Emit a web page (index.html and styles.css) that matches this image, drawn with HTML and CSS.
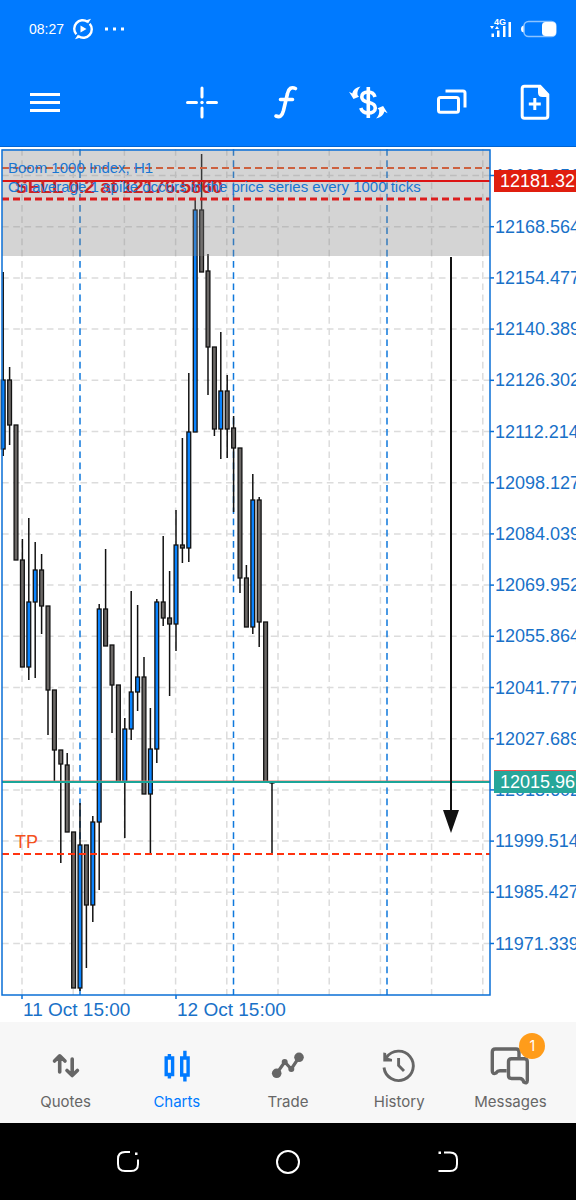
FILE: index.html
```
<!DOCTYPE html>
<html lang="en">
<head>
    <meta charset="UTF-8">
    <meta name="viewport" content="width=device-width, initial-scale=1.0">
    <title>Boom 1000 Index, H1</title>
    <link rel="stylesheet" href="styles.css">
</head>
<body>
    <header>
        <div class="status-bar">
            <span class="clock">08:27</span>
            <svg class="play-icon" width="22" height="22" viewBox="0 0 22 22">
                <path d="M4.300 16.300A8.500 8.500 0 0 1 15.500 3.700M17.700 5.700A8.500 8.500 0 0 1 6.500 18.300" fill="none" stroke="#fff" stroke-width="2.400"/>
                <path d="M13.500 2.500L19 .8 16 5.500zM8.500 19.500L3 21.200 6 16.500zM8.500 7.500L14.500 11 8.500 14.500z" fill="#fff"/>
            </svg>
            <svg width="22" height="22" viewBox="0 0 22 22" fill="#fff">
                <rect x="0" y="9.500" width="3" height="3"/>
                <rect x="8" y="9.500" width="3" height="3"/>
                <rect x="16" y="9.500" width="3" height="3"/>
            </svg>
            <svg class="signal" width="24" height="22" viewBox="0 0 24 22" fill="#fff">
                <text x="5" y="7" class="signal-text">4G</text>
                <path d="M1 8h4l-2 3zM6 11h4l-2-3zM2.500 15.500h2.500v3.500H2.500zM8 12.500h2.500v6.500H8zM14 8h2.500v11H14zM19.500 4h2.500v15H19.500z"/>
            </svg>
            <svg class="battery" width="36" height="18" viewBox="0 0 36 18">
                <rect x="3" y="1.500" width="32" height="15" rx="4.500" fill="none" stroke="#8cc3ff" stroke-width="1.500"/>
                <rect x="21" y="2" width="14" height="14" rx="3.500" fill="#fff"/>
                <path d="M2.500 5.500Q0 6 0 9t2.500 3.500z" fill="#fff"/>
            </svg>
        </div>
        <div class="toolbar">
            <button class="menu" aria-label="Menu">
                <svg width="40" height="40" viewBox="0 0 40 40">
                    <path d="M5 11.500h30M5 19.500h30M5 27.500h30"/>
                </svg>
            </button>
            <button aria-label="Crosshair">
                <svg width="40" height="40" viewBox="0 0 40 40">
                    <path d="M4.500 19.500h9M24.500 19.500h9M19 5v9M19 25v9" stroke-linecap="round"/>
                    <circle cx="19" cy="19.500" r="1.700" class="solid"/>
                </svg>
            </button>
            <button aria-label="Indicators">
                <svg width="40" height="40" viewBox="0 0 40 40">
                    <path d="M29.500 5.500c-4-2-7 0-8 5l-4 17c-1.300 5-3.500 7.300-7.500 5.500M14.500 16.500h12" stroke-width="3.600" stroke-linecap="round"/>
                </svg>
            </button>
            <button aria-label="New order">
                <svg width="40" height="40" viewBox="0 0 40 40">
                    <path d="M26 14c-1-3.500-3.500-5-6.700-5-4 0-6.500 1.800-6.500 5 0 3.500 2.700 4.500 6.500 5.300s7 2 7 5.700c0 3.300-3 5-7 5s-6.500-1.700-7.500-5" stroke-width="3.600"/>
                    <path d="M19.300 4v31" stroke-width="3.600"/>
                    <path id="turn" class="solid" d="M0 8.800L4.500 16 10 13.800 8.500 12C8 9 9 6 11.500 3.500 7 4.500 4 7 3.300 10.500z"/>
                    <use href="#turn" transform="rotate(180 19.300 19.500)"/>
                </svg>
            </button>
            <button aria-label="Windows">
                <svg width="40" height="40" viewBox="0 0 40 40">
                    <rect x="6.500" y="14.500" width="20" height="14.700" rx="2"/>
                    <path d="M13.500 8H31q2 0 2 2v14.500"/>
                </svg>
            </button>
            <button aria-label="New chart">
                <svg width="40" height="40" viewBox="0 0 40 40">
                    <path d="M9.500 3.300H25L32.800 11.500V33q0 2.300-2.300 2.300h-21Q7.200 35.300 7.200 33V5.600Q7.200 3.300 9.500 3.300zM19.800 15v12M13.800 21h12"/>
                    <path class="solid" d="M23 3H26l8 8.500V14h-6.500q-4.500 0-4.500-4.500z"/>
                </svg>
            </button>
        </div>
    </header>

    <main>
        <svg class="chart" id="chart" viewBox="0 147 576 875">
            <g id="grid"></g>
            <g id="candles"></g>
            <path class="stop-line" d="M2 168H490"/>
            <rect class="zone" x="2" y="149" width="488" height="107"/>
            <path class="ask-line" d="M2 181H490"/>
            <path class="open-line" d="M2 199H490"/>
            <path class="last-line" d="M2 781H490"/>
            <path class="bid-line" d="M2 782H490"/>
            <path class="tp-line" d="M2 854H490"/>
            <text class="sell" x="15" y="193">SELL 0.2 at 12176.5860</text>
            <text class="title" x="8" y="173">Boom 1000 Index, H1</text>
            <text class="title" x="8" y="192">On average 1 spike occurs in the price series every 1000 ticks</text>
            <text class="tp" x="15" y="848">TP</text>
            <path class="arrow" d="M451 257V812"/>
            <path class="arrow-head" d="M443 810h16l-8 23z"/>
            <rect class="frame" x="2" y="150" width="488" height="845" stroke-width="1.500"/>
            <g id="prices"></g>
            <text class="time" x="23" y="1016">11 Oct 15:00</text>
            <text class="time" x="177" y="1016">12 Oct 15:00</text>
            <rect class="ask-tag" x="494" y="170" width="82" height="22"/>
            <text class="tag-text" x="500" y="187">12181.32</text>
            <rect class="last-tag" x="494" y="770" width="82" height="2"/>
            <rect class="bid-tag" x="494" y="771" width="82" height="22"/>
            <text class="tag-text" x="500" y="788">12015.96</text>
        </svg>
    </main>

    <nav class="tabs">
        <a href="#quotes">
            <svg width="40" height="40" viewBox="0 0 40 40">
                <path d="M13.700 26V10M8.500 15l5.200-5.200L19 15M26.200 13v16M21 24.500l5.200 5 5.200-5" stroke-width="3.600" stroke-linecap="round" stroke-linejoin="round"/>
            </svg>
            Quotes
        </a>
        <a href="#charts" class="active">
            <svg width="40" height="40" viewBox="0 0 40 40">
                <path d="M9.200 12h6.400v16.500H9.200zM12.400 8v3.500M12.400 29v3.500M24.700 12h6.400v17h-6.400zM27.900 4.700v6.800M27.900 29v6.500" stroke-width="3.400"/>
            </svg>
            Charts
        </a>
        <a href="#trade">
            <svg width="40" height="40" viewBox="0 0 40 40">
                <path d="M8.700 27.300l8-11.300 6.600 7 7.700-11.700" stroke-width="3.200"/>
                <circle cx="8.700" cy="27.300" r="4.800" class="solid"/>
                <circle cx="16.700" cy="16" r="3" class="solid"/>
                <circle cx="23.300" cy="23" r="3" class="solid"/>
                <circle cx="31" cy="11.300" r="4.800" class="solid"/>
            </svg>
            Trade
        </a>
        <a href="#history">
            <svg width="40" height="40" viewBox="0 0 40 40">
                <path d="M5 21.500A14.700 14.700 0 1 0 7.500 11.500M19.600 12v7.500l5.400 5.500" stroke-width="2.900"/>
                <path class="solid" d="M4.300 6.500L7 7l1 4.500 5 1.500v2.500H4.300z"/>
            </svg>
            History
        </a>
        <a href="#messages">
            <svg width="40" height="40" viewBox="0 0 40 40">
                <path d="M16.500 24.800H10q-2.500 0-4 2.200-3.700 1.500-3.700-2V6q0-3 3-3H26q3 0 3 3v5M21.500 12.800h12.800q3 0 3 3v18.700q0 3.500-3.500 1.500-1-3.500-4-3.500h-8.300q-3 0-3-3V15.800q0-3 3-3z" stroke-width="3.400"/>
            </svg>
            Messages
            <span class="badge">1</span>
        </a>
    </nav>

    <footer>
        <button aria-label="Recent apps">
            <svg width="24" height="24" viewBox="0 0 24 24">
                <path d="M14 2H9Q2 2 2 9v5q0 7 7 7h6q7 0 7-7V9.500" />
                <rect x="19" y="2.500" width="2.500" height="2.500" class="solid"/>
            </svg>
        </button>
        <button aria-label="Home">
            <svg width="24" height="24" viewBox="0 0 24 24">
                <circle cx="12" cy="12" r="11"/>
            </svg>
        </button>
        <button aria-label="Back">
            <svg width="24" height="24" viewBox="0 0 24 24">
                <path d="M8 2.500h6q7 0 7 7v4.500q0 7-7 7H2.500"/>
                <rect x="2.500" y="1.500" width="2.500" height="2.500" class="solid"/>
            </svg>
        </button>
    </footer>

    <script src="chart.js"></script>
</body>
</html>
```
FILE: styles.css
```
body {
    margin: 0;
    min-height: 100vh;
    display: flex;
    flex-direction: column;
    background: #fff;
    font-family: "Liberation Sans", Arial, sans-serif;
}

button {
    margin: 0;
    padding: 0;
    border: none;
    background: none;
    cursor: pointer;
}

svg {
    display: block;
}

/* header */
header {
    background: #007aff;
    border-bottom: 1px solid #0064d2;
    color: #fff;
}

.status-bar {
    display: flex;
    align-items: center;
    height: 58px;
    padding: 0 19px 0 29px;
}

.clock {
    font-size: 14px;
}

.play-icon {
    margin: 0 11px 0 8px;
}

.signal {
    margin-left: auto;
}

.signal-text {
    font-size: 9px;
    font-weight: bold;
}

.battery {
    margin-left: 8px;
}

.toolbar {
    display: flex;
    height: 86px;
    padding-top: 2px;
}

.toolbar button {
    display: flex;
    flex: 0 0 83px;
    align-items: center;
    justify-content: center;
}

.toolbar .menu {
    flex-basis: 89px;
    margin-right: auto;
}

.toolbar svg {
    fill: none;
    stroke: #fff;
    stroke-width: 3;
}

.toolbar .solid {
    fill: #fff;
    stroke: none;
}

/* chart */
.chart {
    width: 100%;
    height: auto;
    fill: none;
}

.grid-line {
    stroke: #dcdcdc;
}

.day-line {
    stroke: #0f78dc;
}

.wick {
    stroke: #111;
}

.candle {
    fill: #6b6866;
    stroke: #111;
}

.candle.up {
    fill: #0a84ff;
}

.zone {
    fill: rgba(128, 128, 128, 0.34);
}

.stop-line {
    stroke: #f4511e;
    stroke-width: 2;
    stroke-dasharray: 7 4;
}

.ask-line {
    stroke: #dc1414;
    stroke-width: 2;
}

.open-line {
    stroke: #dc1e1e;
    stroke-width: 3;
    stroke-dasharray: 7 4;
}

.last-line {
    stroke: #e57368;
}

.bid-line {
    stroke: #1ca598;
    stroke-width: 2;
}

.tp-line {
    stroke: #ff3310;
    stroke-width: 2;
    stroke-dasharray: 7 4;
}

.frame,
.tick {
    stroke: #0a6fd6;
}

.arrow {
    stroke: #111;
    stroke-width: 2;
}

.arrow-head {
    fill: #111;
}

.title {
    fill: #1976d2;
    font-size: 15px;
}

.sell {
    fill: #cc2525;
    font-size: 19px;
    font-weight: bold;
}

.tp {
    fill: #f4511e;
    font-size: 18px;
}

.price {
    fill: #1971c8;
    font-size: 18px;
}

.time {
    fill: #1971c8;
    font-size: 19px;
}

.ask-tag {
    fill: #e01e0f;
}

.last-tag {
    fill: #ef5350;
}

.bid-tag {
    fill: #26a69a;
}

.tag-text {
    fill: #fff;
    font-size: 18px;
}

/* bottom tabs */
.tabs {
    display: grid;
    grid-template-columns: repeat(5, 1fr);
    padding: 24px 10px 11px;
    background: #f7f7f7;
}

.tabs a {
    position: relative;
    display: flex;
    flex-direction: column;
    align-items: center;
    gap: 6px;
    color: #666;
    font-family: Inter, sans-serif;
    font-size: 15px;
    line-height: 20px;
    text-decoration: none;
}

.tabs svg {
    fill: none;
    stroke: currentColor;
}

.tabs .solid {
    fill: currentColor;
    stroke: none;
}

.tabs .active {
    color: #007aff;
}

.badge {
    position: absolute;
    top: -13px;
    left: calc(50% + 9px);
    width: 26px;
    border-radius: 13px;
    background: #ff9c1a;
    color: #fff;
    font-size: 14px;
    line-height: 26px;
    text-align: center;
}

/* system navigation */
footer {
    flex: 1;
    display: grid;
    grid-template-columns: repeat(3, 1fr);
    align-items: center;
    min-height: 77px;
    padding: 0 48px;
    box-sizing: border-box;
    background: #000;
}

footer button {
    justify-self: center;
}

footer svg {
    fill: none;
    stroke: #fff;
    stroke-width: 2;
}

footer .solid {
    fill: #fff;
    stroke: none;
}
```
FILE: chart.js
```
const STEP = 51.2;
const CANDLE_STEP = 6.4;

const prices = [
    '12182.651', '12168.564', '12154.477', '12140.389', '12126.302', '12112.214',
    '12098.127', '12084.039', '12069.952', '12055.864', '12041.777', '12027.689',
    '12013.602', '11999.514', '11985.427', '11971.339'
];

// wick top, body top, body bottom, wick bottom, 1 = bullish
const candles = [
    [272, 380, 449, 456, 1], [367, 380, 425, 445, 0], [425, 425, 560, 560, 0],
    [539, 560, 667, 667, 0], [518, 602, 667, 680, 1], [542, 570, 602, 678, 1],
    [554, 570, 606, 634, 0], [606, 606, 690, 735, 0], [690, 690, 750, 782, 0],
    [750, 750, 764, 863, 0], [753, 765, 832, 832, 0], [832, 832, 988, 988, 0],
    [803, 845, 988, 991, 1], [845, 845, 905, 968, 0], [816, 822, 905, 922, 1],
    [604, 609, 822, 890, 1], [549, 609, 646, 646, 0], [645, 645, 685, 733, 0],
    [685, 685, 782, 782, 0], [718, 729, 782, 838, 1], [591, 692, 729, 740, 1],
    [605, 677, 692, 711, 1], [657, 677, 794, 794, 0], [708, 749, 794, 854, 1],
    [599, 602, 749, 763, 1], [536, 602, 618, 626, 0], [571, 618, 624, 696, 0],
    [510, 545, 624, 651, 1], [438, 545, 548, 563, 0], [373, 432, 548, 562, 1],
    [200, 210, 432, 432, 1], [154, 210, 272, 272, 0], [254, 271, 347, 395, 0],
    [347, 347, 429, 436, 0], [332, 391, 429, 459, 1], [375, 391, 429, 458, 0],
    [416, 428, 448, 512, 0], [448, 448, 578, 593, 0], [565, 578, 627, 627, 0],
    [474, 500, 627, 634, 1], [497, 500, 622, 647, 0], [622, 622, 782, 782, 0],
    [782, 782, 783, 854, 0]
];

function draw(parent, tag, attrs, text) {
    const el = document.createElementNS('http://www.w3.org/2000/svg', tag);
    for (const name in attrs) {
        el.setAttribute(name, attrs[name]);
    }
    if (text) {
        el.textContent = text;
    }
    document.getElementById(parent).appendChild(el);
}

function drawLine(parent, className, d, dashed) {
    const attrs = { class: className, d: d, 'stroke-width': 1.5 };
    if (dashed) {
        attrs['stroke-dasharray'] = '6.7 4.5';
    }
    draw(parent, 'path', attrs);
}

// grid and price scale
for (let i = 0; i < 10; i++) {
    drawLine('grid', 'grid-line', `M${22 + i * STEP} 149V995`, true);
}
prices.forEach((price, i) => {
    const y = 175.5 + i * STEP;
    drawLine('grid', 'grid-line', `M2 ${y}H490`, true);
    drawLine('prices', 'tick', `M490 ${y}h4`);
    draw('prices', 'text', { class: 'price', x: 495, y: y + 6 }, price);
});

// day separators
[80, 233.5, 387].forEach(x => {
    drawLine('grid', 'day-line', `M${x} 149V995`, true);
});

[22, 176].forEach(x => {
    drawLine('prices', 'tick', `M${x} 995v4`);
});

// candles
candles.forEach(([high, top, bottom, low, up], i) => {
    const x = 3.2 + i * CANDLE_STEP;
    drawLine('candles', 'wick', `M${x} ${high}V${low}`);
    draw('candles', 'rect', {
        class: up ? 'candle up' : 'candle',
        x: x - 1.9,
        y: top,
        width: 3.8,
        height: bottom - top,
        'stroke-width': 1.3
    });
});
```
